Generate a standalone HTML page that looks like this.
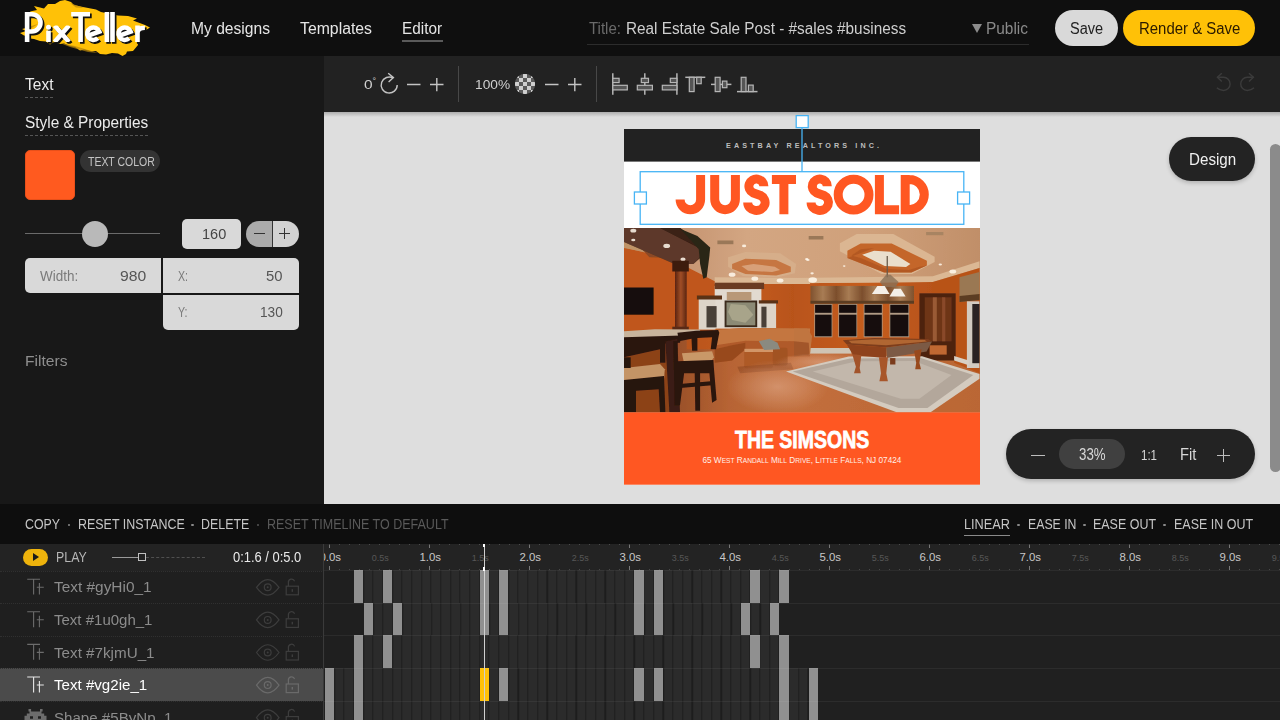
<!DOCTYPE html>
<html>
<head>
<meta charset="utf-8">
<title>PixTeller Editor</title>
<style>
*{box-sizing:border-box;margin:0;padding:0}
html,body{width:1280px;height:720px;overflow:hidden;background:#181818;font-family:"Liberation Sans",sans-serif;}
.a{position:absolute}
.t{position:absolute;white-space:nowrap;line-height:1;transform-origin:0 0}
#hdr{left:0;top:0;width:1280px;height:56px;background:#0f0f0f}
#lp{left:0;top:56px;width:324px;height:448px;background:#181818}
#tb{left:324px;top:56px;width:956px;height:56px;background:#222222}
#cv{left:324px;top:112px;width:956px;height:392px;background:#dedede;overflow:hidden}
#ab{left:0;top:504px;width:1280px;height:40px;background:#0e0e0e}
#tl{left:0;top:544px;width:1280px;height:176px;background:#222;overflow:hidden}
</style>
</head>
<body>
<!-- HEADER -->
<div id="hdr" class="a">
  <svg class="a" style="left:0;top:0" width="170" height="56" viewBox="0 0 170 56">
    <defs><clipPath id="xc"><rect x="50" y="25.6" width="24" height="16.4"/></clipPath></defs>
    <polygon fill="#ffc107" points="20,33 26,31 22,29 28,27.5 26,24 31,21 27,17 33,15 30,11.5 37,10 34,6 44,8.5 48,4 55,4 60,1 65,0 71,2 74,5 83,7 96,9.5 101,12 118,15.5 128,16 137,18.5 133,20.5 145,25 150,27.5 146,30 138,31 141,36 137,40 138,45 133,51 127,51.5 126,54 122.5,56 118,53.5 112,53 106,54.5 100,54 96,51 92,51.5 84,49.5 80,50.5 75,47 70,46 64,43.5 60,44 54,42 50,44.5 46,41.5 40,41 34,39 30,38.5 28,36 24,35.5"/>
    <path d="M60,43 L75,46 L98,53 L88,52 L70,47Z M70,3 L84,8 L76,7.5Z M28,27 L38,24 L30,29Z" fill="#b8860b" opacity="0.7"/>
    <g transform="translate(1.7,1.7)" fill="none" stroke="#111" stroke-width="4.6"><path d="M27.1 12 V42 M27.1 14.2 H31.85 A8.65 8.65 0 0 1 31.85 31.5 H27.1"/>
<path d="M48.5 30.6 V42"/><circle cx="48.5" cy="27.2" r="2.5" stroke="none" fill="#111"/>
<path d="M54.6 25.6 L69 42 M69 25.6 L54.6 42" clip-path="url(#xc)"/>
<path d="M71.2 14.2 H90 M80.6 12 V42"/>
<path d="M87.5 35.9 L99.3 31.6 A6.25 6.25 0 1 0 97.8 38.2"/>
<path d="M106.9 12 V42 M112.5 12 V42"/>
<path d="M118.8 35.9 L130.6 31.6 A6.25 6.25 0 1 0 129.1 38.2"/>
<path d="M137.5 25.6 V42 M137.5 33 Q137.5 27.8 144.9 27.8"/></g>
    <g fill="none" stroke="#fff" stroke-width="4.6"><path d="M27.1 12 V42 M27.1 14.2 H31.85 A8.65 8.65 0 0 1 31.85 31.5 H27.1"/>
<path d="M48.5 30.6 V42"/><circle cx="48.5" cy="27.2" r="2.5" stroke="none" fill="#fff"/>
<path d="M54.6 25.6 L69 42 M69 25.6 L54.6 42" clip-path="url(#xc)"/>
<path d="M71.2 14.2 H90 M80.6 12 V42"/>
<path d="M87.5 35.9 L99.3 31.6 A6.25 6.25 0 1 0 97.8 38.2"/>
<path d="M106.9 12 V42 M112.5 12 V42"/>
<path d="M118.8 35.9 L130.6 31.6 A6.25 6.25 0 1 0 129.1 38.2"/>
<path d="M137.5 25.6 V42 M137.5 33 Q137.5 27.8 144.9 27.8"/></g>
  </svg>
  <div class="t" id="n1" style="left:191px;top:20.8px;font-size:15.6px;color:#e6e6e6;transform:scaleX(1.002)">My designs</div>
  <div class="t" id="n2" style="left:300px;top:20.8px;font-size:15.6px;color:#e6e6e6;transform:scaleX(1.013)">Templates</div>
  <div class="t" id="n3" style="left:402px;top:20.8px;font-size:15.6px;color:#e6e6e6;transform:scaleX(0.982)">Editor</div>
  <div class="a" style="left:402px;top:40.3px;width:40.5px;height:1.7px;background:#5a5a5a"></div>
  <div class="t" id="ti1" style="left:589px;top:20.8px;font-size:15.6px;color:#6a6a6a;transform:scaleX(0.963)">Title:</div>
  <div class="t" id="ti2" style="left:626px;top:20.8px;font-size:15.6px;color:#cfcfcf;transform:scaleX(0.982)">Real Estate Sale Post - #sales #business</div>
  <div class="a" style="left:587px;top:44px;width:442px;height:1px;background:#2c2c2c"></div>
  <div class="a" style="left:972px;top:24px;width:0;height:0;border-left:5px solid transparent;border-right:5px solid transparent;border-top:9px solid #8c8c8c"></div>
  <div class="t" id="pub" style="left:986px;top:20.8px;font-size:15.6px;color:#8a8a8a;transform:scaleX(0.989)">Public</div>
  <div class="a" style="left:1055px;top:10px;width:63px;height:36px;border-radius:18px;background:#d9d9d9"></div>
  <div class="t" id="sv" style="left:1070px;top:20.8px;font-size:15.6px;color:#222;transform:scaleX(0.934)">Save</div>
  <div class="a" style="left:1123px;top:10px;width:132px;height:36px;border-radius:18px;background:#ffc107"></div>
  <div class="t" id="rs" style="left:1139px;top:20.8px;font-size:15.6px;color:#2a1a00;transform:scaleX(0.958)">Render &amp; Save</div>
</div>

<!-- LEFT PANEL -->
<div id="lp" class="a">
  <div class="t" id="l1" style="left:25px;top:20.9px;font-size:15.6px;color:#ececec;transform:scaleX(0.996)">Text</div>
  <div class="a" style="left:25px;top:41px;width:28px;height:0;border-top:1px dashed #555"></div>
  <div class="t" id="l2" style="left:25px;top:58.8px;font-size:15.6px;color:#ececec;transform:scaleX(0.987)">Style &amp; Properties</div>
  <div class="a" style="left:25px;top:79px;width:123px;height:0;border-top:1px dashed #555"></div>
  <div class="a" style="left:25px;top:94px;width:50px;height:50px;border-radius:5px;background:#ff5a1f;border:1px solid #e8501a"></div>
  <div class="a" style="left:80px;top:94px;width:80px;height:22px;border-radius:11px;background:#333"></div>
  <div class="t" id="l3" style="left:87.5px;top:99.7px;font-size:12px;color:#c4c4c4;transform:scaleX(0.873)">TEXT COLOR</div>
  <!-- slider -->
  <div class="a" style="left:25px;top:177px;width:135px;height:1px;background:#6a6a6a"></div>
  <div class="a" style="left:82px;top:165px;width:26px;height:26px;border-radius:13px;background:#b9b9b9"></div>
  <div class="a" style="left:182px;top:163px;width:59px;height:30px;border-radius:5px;background:#d9d9d9"></div>
  <div class="t" id="l4" style="left:202px;top:170px;font-size:15px;color:#444;transform:scaleX(0.969)">160</div>
  <div class="a" style="left:246px;top:165px;width:27px;height:26px;border-radius:13px 0 0 13px;background:#ababab"></div>
  <div class="a" style="left:273px;top:165px;width:26px;height:26px;border-radius:0 13px 13px 0;background:#d2d2d2"></div>
  <div class="a" style="left:272px;top:165px;width:1px;height:26px;background:#333"></div>
  <div class="a" style="left:254px;top:177px;width:11px;height:1px;background:#333"></div>
  <div class="a" style="left:279px;top:177px;width:11px;height:1px;background:#333"></div>
  <div class="a" style="left:284px;top:172px;width:1px;height:11px;background:#333"></div>
  <!-- fields -->
  <div class="a" style="left:25px;top:202px;width:136px;height:35px;border-radius:5px 0 0 5px;background:#d9d9d9"></div>
  <div class="a" style="left:163px;top:202px;width:136px;height:35px;border-radius:0 5px 0 0;background:#d9d9d9"></div>
  <div class="a" style="left:163px;top:239px;width:136px;height:35px;border-radius:0 0 5px 5px;background:#d9d9d9"></div>
  <div class="t" id="l5" style="left:40px;top:213px;font-size:14px;color:#7a7a7a;transform:scaleX(0.964)">Width:</div>
  <div class="t" id="l6" style="left:120px;top:212px;font-size:15px;color:#555;transform:scaleX(1.049)">980</div>
  <div class="t" id="l7" style="left:178px;top:213px;font-size:14px;color:#7a7a7a;transform:scaleX(0.756)">X:</div>
  <div class="t" id="l8" style="left:266px;top:212px;font-size:15px;color:#555;transform:scaleX(0.989)">50</div>
  <div class="t" id="l9" style="left:178px;top:249px;font-size:14px;color:#7a7a7a;transform:scaleX(0.762)">Y:</div>
  <div class="t" id="l10" style="left:260px;top:248px;font-size:15px;color:#555;transform:scaleX(0.909)">130</div>
  <div class="t" id="l11" style="left:25px;top:297px;font-size:15px;color:#8e8e8e;transform:scaleX(1.041)">Filters</div>
</div>

<!-- TOOLBAR -->
<div id="tb" class="a">
  <div class="t" id="t1" style="left:39.5px;top:21.5px;font-size:13.5px;color:#d0d0d0;transform:scaleX(1.144)">0</div>
  <div class="t" id="t1b" style="left:48.5px;top:20.5px;font-size:9px;color:#d0d0d0">°</div>
  <div class="t" id="t2" style="left:150.5px;top:21.5px;font-size:13.5px;color:#d0d0d0;transform:scaleX(1.016)">100%</div>
  <svg class="a" style="left:0;top:0" width="956" height="56" viewBox="324 56 956 56" fill="none" stroke="#c4c4c4" stroke-width="1.4">
    <defs><clipPath id="ck"><circle cx="525" cy="84" r="10.2"/></clipPath></defs>
    <!-- rotate -->
    <path d="M393.2 78.1 A8 8 0 1 0 397.2 85"/>
    <path d="M388.2 73.2 L393.4 77.6 L388.6 81.9"/>
    <path d="M407 84.5 H420.5 M430 84.5 H443.5 M436.8 78 V91.2"/>
    <path d="M458.5 66 V102 M596.5 66 V102" stroke="#484848" stroke-width="1"/>
    <g clip-path="url(#ck)" stroke="none"><rect x="515" y="74" width="4.1" height="4.1" fill="#cfcfcf"/><rect x="519" y="74" width="4.1" height="4.1" fill="#5a5a5a"/><rect x="523" y="74" width="4.1" height="4.1" fill="#cfcfcf"/><rect x="527" y="74" width="4.1" height="4.1" fill="#5a5a5a"/><rect x="531" y="74" width="4.1" height="4.1" fill="#cfcfcf"/><rect x="515" y="78" width="4.1" height="4.1" fill="#5a5a5a"/><rect x="519" y="78" width="4.1" height="4.1" fill="#cfcfcf"/><rect x="523" y="78" width="4.1" height="4.1" fill="#5a5a5a"/><rect x="527" y="78" width="4.1" height="4.1" fill="#cfcfcf"/><rect x="531" y="78" width="4.1" height="4.1" fill="#5a5a5a"/><rect x="515" y="82" width="4.1" height="4.1" fill="#cfcfcf"/><rect x="519" y="82" width="4.1" height="4.1" fill="#5a5a5a"/><rect x="523" y="82" width="4.1" height="4.1" fill="#cfcfcf"/><rect x="527" y="82" width="4.1" height="4.1" fill="#5a5a5a"/><rect x="531" y="82" width="4.1" height="4.1" fill="#cfcfcf"/><rect x="515" y="86" width="4.1" height="4.1" fill="#5a5a5a"/><rect x="519" y="86" width="4.1" height="4.1" fill="#cfcfcf"/><rect x="523" y="86" width="4.1" height="4.1" fill="#5a5a5a"/><rect x="527" y="86" width="4.1" height="4.1" fill="#cfcfcf"/><rect x="531" y="86" width="4.1" height="4.1" fill="#5a5a5a"/><rect x="515" y="90" width="4.1" height="4.1" fill="#cfcfcf"/><rect x="519" y="90" width="4.1" height="4.1" fill="#5a5a5a"/><rect x="523" y="90" width="4.1" height="4.1" fill="#cfcfcf"/><rect x="527" y="90" width="4.1" height="4.1" fill="#5a5a5a"/><rect x="531" y="90" width="4.1" height="4.1" fill="#cfcfcf"/></g>
    <path d="M545 84.5 H558.5 M568 84.5 H581.5 M574.8 78 V91.2"/>
    <!-- align left -->
    <g stroke-width="1.2" fill="#555" stroke="#b6b6b6">
    <path d="M612.8 73.3 V94.7" stroke-width="1.5"/>
    <rect x="612.8" y="78.3" width="6.3" height="4.3"/>
    <rect x="612.8" y="85.3" width="14.5" height="4.6"/>
    <!-- center h -->
    <path d="M644.8 73.3 V94.7" stroke-width="1.5"/>
    <rect x="641.3" y="78.3" width="7.2" height="4.3"/>
    <rect x="637.3" y="85.3" width="15.1" height="4.6"/>
    <!-- right -->
    <path d="M676.9 73.3 V94.7" stroke-width="1.5"/>
    <rect x="670.3" y="78.3" width="6.6" height="4.3"/>
    <rect x="662.3" y="85.3" width="14.6" height="4.6"/>
    <!-- top -->
    <path d="M685.3 77.3 H705.3" stroke-width="1.5"/>
    <rect x="689.3" y="77.3" width="4.8" height="14.3"/>
    <rect x="696.7" y="77.3" width="4.5" height="6.4"/>
    <!-- middle -->
    <path d="M711 84.4 H731.4" stroke-width="1.5"/>
    <rect x="715.2" y="77.3" width="4.9" height="14.3"/>
    <rect x="722.4" y="81.1" width="4.5" height="6.6"/>
    <!-- bottom -->
    <path d="M737 91.6 H757.5" stroke-width="1.5"/>
    <rect x="741.2" y="77.3" width="4.8" height="14.3"/>
    <rect x="748.4" y="85.1" width="4.8" height="6.5"/>
    </g>
    <!-- undo redo -->
    <g stroke="#3b3b3b" stroke-width="1.4">
    <path d="M1217.2 77.3 H1223.5 A6.6 6.6 0 0 1 1223.5 90.5 Q1219.5 90.5 1216.8 87.8"/>
    <path d="M1221.8 73.3 L1217.4 77.3 L1221.8 81.6"/>
    <path d="M1253.6 77.3 H1247.3 A6.6 6.6 0 0 0 1247.3 90.5 Q1251.3 90.5 1254 87.8"/>
    <path d="M1249 73.3 L1253.4 77.3 L1249 81.6"/>
    </g>
  </svg>
</div>

<!-- CANVAS -->
<div id="cv" class="a">
  <div class="a" style="left:0;top:0;width:956px;height:5px;background:linear-gradient(#00000038,#0000)"></div>
  <svg class="a" style="left:0;top:0" width="956" height="392" viewBox="324 112 956 392">
    <rect x="624" y="129" width="356" height="355.7" fill="#fff"/>
    <rect x="624" y="129" width="356" height="32.6" fill="#222"/>
    <text x="726" y="147.8" font-family="Liberation Sans" font-weight="bold" font-size="7.2" fill="#bdbdbd" textLength="153" lengthAdjust="spacing">EASTBAY REALTORS INC.</text>
    <rect x="624" y="228" width="356" height="184.5" fill="#b8662e"/><!--PHOTO_START--><defs>
<clipPath id="pc"><rect x="624" y="228" width="356" height="184.5"/></clipPath>
<filter id="pb" x="-5%" y="-5%" width="110%" height="110%"><feGaussianBlur stdDeviation="0.55"/></filter>
<linearGradient id="gceil" x1="0" y1="0" x2="1" y2="0"><stop offset="0" stop-color="#b98462"/><stop offset="0.35" stop-color="#d3a682"/><stop offset="0.7" stop-color="#cfa07a"/><stop offset="1" stop-color="#c08e68"/></linearGradient>
<linearGradient id="gfloor" x1="0" y1="0" x2="1" y2="0"><stop offset="0" stop-color="#7a3a1c"/><stop offset="0.3" stop-color="#b76434"/><stop offset="0.5" stop-color="#c26e3c"/><stop offset="1" stop-color="#ba6634"/></linearGradient>
<linearGradient id="gwall" x1="0" y1="0" x2="1" y2="0"><stop offset="0" stop-color="#b9541a"/><stop offset="0.45" stop-color="#c55d1e"/><stop offset="1" stop-color="#b45018"/></linearGradient>
<linearGradient id="gcol" x1="0" y1="0" x2="1" y2="0"><stop offset="0" stop-color="#5a2410"/><stop offset="0.5" stop-color="#a04e26"/><stop offset="1" stop-color="#5a2410"/></linearGradient>
<linearGradient id="gshade" x1="0" y1="0" x2="1" y2="0"><stop offset="0" stop-color="#80522e"/><stop offset="0.12" stop-color="#a87c54"/><stop offset="0.25" stop-color="#7c4e2c"/><stop offset="0.37" stop-color="#a87c54"/><stop offset="0.5" stop-color="#7c4e2c"/><stop offset="0.62" stop-color="#a87c54"/><stop offset="0.75" stop-color="#7c4e2c"/><stop offset="0.87" stop-color="#a87c54"/><stop offset="1" stop-color="#80522e"/></linearGradient>
<radialGradient id="ghl"><stop offset="0" stop-color="#e0aa8a" stop-opacity="0.6"/><stop offset="1" stop-color="#e2b094" stop-opacity="0"/></radialGradient>
</defs>
<g clip-path="url(#pc)"><g filter="url(#pb)">
<rect x="620" y="224" width="364" height="70" fill="url(#gceil)"/>
<rect x="620" y="330" width="364" height="86" fill="url(#gfloor)"/>
<polygon points="686.7,284.0 810.0,284.0 810.0,349.3 686.7,349.3" fill="url(#gwall)" />
<polygon points="794.0,283.2 932.8,282.1 954.1,278.7 954.1,349.3 794.0,349.3" fill="url(#gwall)" />
<polygon points="714.7,277.3 810.0,278.1 810.0,284.0 714.7,284.0" fill="#dbb894" />
<polygon points="794.0,278.1 932.8,276.3 979.5,261.3 979.5,268.0 932.8,282.1 794.0,283.2" fill="#dbb894" />
<polygon points="932.8,282.1 979.5,268.0 979.5,373.3 954.1,362.7 954.1,349.3 932.8,349.3" fill="#b85319" />
<polygon points="624.0,247.5 670.7,258.7 714.7,281.3 714.7,330.7 624.0,333.3" fill="#c0561a" />
<polygon points="624.0,240.0 670.7,257.3 624.0,248.0" fill="#c09468" />
<polygon points="642.7,249.9 670.7,250.7 672.0,258.1 649.4,257.3" fill="#8c4a26" />
<polygon points="624.0,228.0 680.0,228.0 710.2,249.3 693.4,264.0 674.7,264.0 624.0,242.1" fill="#4a2c1e" />
<polygon points="624.0,228.0 660.0,228.0 705.4,250.7 693.4,264.0 674.7,264.0 624.0,242.1" fill="#6e4634" opacity="0.55"/>
<polygon points="660.0,228.0 680.0,228.0 710.2,249.3 706.7,252.0" fill="#3a2014" />
<polygon points="680.0,228.8 697.4,236.0 710.2,247.5 709.4,256.0 706.7,277.3 703.3,278.7 700.1,264.0 698.7,249.3 688.1,237.3" fill="#2c2618" />
<rect x="717.4" y="240.5" width="16.0" height="3.7" fill="#9a7858" />
<rect x="808.7" y="236.0" width="14.7" height="3.5" fill="#9a7858" />
<rect x="926.1" y="232.0" width="17.3" height="3.2" fill="#a88462" />
<rect x="675.0" y="264.0" width="11.7" height="65.3" fill="url(#gcol)" />
<rect x="672.3" y="260.8" width="16.5" height="10.7" fill="#3c1c10" />
<rect x="672.3" y="326.7" width="16.5" height="4.0" fill="#5a2c18" />
<rect x="624.0" y="287.5" width="29.6" height="27.2" fill="#170d0a" />
<polygon points="728.1,257.3 745.4,252.0 780.1,253.3 796.1,264.0 794.8,273.3 777.5,277.3 742.8,276.0 728.1,266.7" fill="#d6ae8a" />
<polygon points="732.1,264.0 745.4,258.7 776.1,260.0 790.8,266.7 790.8,272.0 776.1,275.5 745.4,274.1 732.1,268.8" fill="#c4703a" opacity="0.9"/>
<polygon points="741.4,266.1 753.4,264.0 774.8,266.7 780.1,269.9 772.1,272.0 748.1,270.7" fill="#d8a078" />
<polygon points="839.9,243.2 856.7,234.1 893.3,234.1 934.6,256.8 934.6,261.9 912.0,274.1 881.5,274.1 839.9,251.2" fill="#dbb692" />
<polygon points="847.4,250.7 860.7,243.5 891.7,243.5 926.9,260.8 926.9,265.6 911.4,272.5 884.2,272.5 847.4,258.1" fill="#c4662a" />
<polygon points="851.4,255.5 860.7,249.3 874.1,248.0 847.4,258.1 884.2,272.5 911.4,272.5 926.9,265.6 919.4,266.7 908.8,269.9 886.1,268.8 860.7,258.1" fill="#a85020" opacity="0.6"/>
<polygon points="862.1,254.7 874.1,250.7 890.6,251.7 910.4,264.0 906.1,266.9 884.7,266.1" fill="#eadfcc" />
<rect x="714.7" y="285.9" width="46.7" height="42.7" fill="#e2dad0" />
<rect x="698.7" y="298.7" width="16.8" height="30.9" fill="#ddd4c8" />
<rect x="760.9" y="302.9" width="15.2" height="25.6" fill="#ddd4c8" />
<rect x="714.7" y="282.7" width="49.4" height="6.4" fill="#6a3a20" />
<rect x="696.9" y="295.5" width="25.1" height="4.0" fill="#5a3018" />
<rect x="758.8" y="300.3" width="19.2" height="3.2" fill="#5a3018" />
<rect x="726.8" y="292.0" width="24.6" height="8.0" fill="#b89878" />
<rect x="724.6" y="300.5" width="32.6" height="26.7" fill="#3a2a1c" />
<rect x="726.5" y="302.4" width="28.8" height="22.9" fill="#8c8a74" />
<polygon points="730.8,304.0 745.4,305.3 753.4,314.7 745.4,322.7 732.1,320.0 728.1,312.0" fill="#a8a48a" />
<rect x="706.5" y="306.1" width="10.1" height="21.3" fill="#4a4038" />
<rect x="761.4" y="306.7" width="5.1" height="20.8" fill="#4a4038" />
<rect x="810.5" y="285.9" width="103.5" height="17.3" fill="url(#gshade)" />
<rect x="810.5" y="300.8" width="103.5" height="2.9" fill="#5c3c22" />
<rect x="814.3" y="304.0" width="18.1" height="33.3" fill="#b09a84" />
<rect x="815.1" y="304.8" width="16.5" height="8.0" fill="#120c0a" />
<rect x="815.1" y="314.7" width="16.5" height="21.6" fill="#120c0a" />
<rect x="838.3" y="304.0" width="18.9" height="33.3" fill="#b09a84" />
<rect x="839.1" y="304.8" width="17.3" height="8.0" fill="#120c0a" />
<rect x="839.1" y="314.7" width="17.3" height="21.6" fill="#120c0a" />
<rect x="863.7" y="304.0" width="18.9" height="33.3" fill="#b09a84" />
<rect x="864.5" y="304.8" width="17.3" height="8.0" fill="#120c0a" />
<rect x="864.5" y="314.7" width="17.3" height="21.6" fill="#120c0a" />
<rect x="889.5" y="304.0" width="19.7" height="33.3" fill="#b09a84" />
<rect x="890.3" y="304.8" width="18.1" height="8.0" fill="#120c0a" />
<rect x="890.3" y="314.7" width="18.1" height="21.6" fill="#120c0a" />
<rect x="919.4" y="293.3" width="36.3" height="67.2" fill="#4e2410" />
<rect x="924.8" y="297.3" width="26.7" height="44.0" fill="#6e3418" />
<rect x="932.8" y="297.3" width="4.0" height="44.0" fill="#9a5a34" />
<rect x="942.1" y="297.3" width="3.2" height="44.0" fill="#8a4a2a" />
<rect x="929.6" y="345.3" width="17.1" height="9.3" fill="#c06830" />
<polygon points="959.5,277.3 979.5,272.0 979.5,300.0 959.5,301.9" fill="#9a7852" />
<polygon points="959.5,296.0 979.5,293.9 979.5,300.0 959.5,301.9" fill="#5c3c22" />
<rect x="966.9" y="301.3" width="12.5" height="66.7" fill="#d2cac0" />
<rect x="972.3" y="304.0" width="7.2" height="59.2" fill="#2a2420" />
<polygon points="954.1,356.0 968.8,360.5 968.8,365.3 954.1,360.5" fill="#d8cfc4" />
<rect x="810.0" y="348.0" width="41.4" height="5.6" fill="#cfc4b4" />
<polygon points="713.4,330.1 745.4,328.0 810.0,328.5 810.0,356.5 785.5,356.5 787.6,348.8 745.4,349.3 732.1,360.5 714.7,362.7 714.7,349.3" fill="#b05a2a" />
<polygon points="713.4,330.1 745.4,328.0 810.0,328.5 810.0,341.3 745.4,340.8 715.5,345.3" fill="#c4763f" />
<polygon points="714.7,349.3 732.1,345.3 745.4,342.7 745.4,349.3 732.1,360.5 714.7,362.7" fill="#984a1e" />
<polygon points="794.0,328.5 807.3,328.5 812.1,336.0 810.0,354.7 794.0,356.5" fill="#c07440" />
<polygon points="794.0,341.3 808.7,342.7 809.5,354.7 794.0,356.5" fill="#a2562a" />
<rect x="744.1" y="349.3" width="28.8" height="18.9" fill="#ae5a28" rx="2"/>
<rect x="772.7" y="347.7" width="14.9" height="17.9" fill="#a25222" rx="2"/>
<rect x="744.4" y="348.8" width="28.6" height="3.2" fill="#d29668" />
<polygon points="737.4,366.7 790.8,362.7 793.5,369.3 740.1,373.3" fill="#8a4420" opacity="0.5"/>
<polygon points="758.8,341.3 769.5,338.7 777.5,342.7 780.1,349.3 764.1,349.9" fill="#8a8a80" />
<ellipse cx="777.5" cy="386.7" rx="50.7" ry="26.7" fill="url(#ghl)" />
<ellipse cx="820.7" cy="362.1" rx="45.4" ry="9.3" fill="url(#ghl)" />
<polygon points="786.0,371.5 848.7,356.5 922.1,356.3 979.5,373.9 979.5,378.7 930.6,412.3 896.7,412.3" fill="#d4cbbf" />
<polygon points="792.7,371.5 850.0,358.4 920.8,358.1 973.3,374.9 927.4,408.0 898.6,408.0" fill="#b3a79b" />
<polygon points="812.7,371.5 856.7,361.3 914.1,361.1 951.5,374.9 919.4,398.7 900.8,398.7" fill="#c2b7ab" />
<polygon points="842.8,340.3 874.1,337.9 928.0,338.9 932.0,341.6 886.1,347.5 846.8,344.5" fill="#7e3e1c" />
<polygon points="848.7,340.8 874.6,339.2 924.8,340.0 926.9,341.6 886.1,345.3 851.4,343.2" fill="#b06632" />
<polygon points="846.8,344.5 886.1,347.5 886.1,358.1 853.2,355.2" fill="#8e421c" />
<polygon points="886.1,347.5 932.0,341.6 926.6,351.5 886.9,358.1" fill="#7c5a44" />
<polygon points="852.2,354.1 861.3,355.2 859.7,368.0 860.7,373.3 854.0,373.3 855.9,366.7" fill="#a2522a" />
<polygon points="878.9,357.3 887.9,357.3 886.3,373.3 887.9,381.3 879.4,381.3 881.0,373.3" fill="#a8562c" />
<polygon points="914.1,350.7 921.6,349.3 919.4,362.7 921.0,369.3 915.2,369.3 916.2,362.7" fill="#98491f" />
<rect x="890.1" y="358.1" width="5.3" height="6.4" fill="#7a3a1a" />
<rect x="886.6" y="256.0" width="1.3" height="21.3" fill="#6a5a4a" />
<polygon points="879.9,282.1 886.1,274.7 890.6,274.7 898.6,282.1 895.4,286.9 883.4,286.9" fill="#8a7058" opacity="0.8"/>
<polygon points="871.9,293.9 877.3,285.9 884.7,285.9 889.5,293.9" fill="#f4eee6" />
<polygon points="889.5,296.5 894.1,288.8 900.8,288.8 905.6,296.5" fill="#f4eee6" />
<polygon points="624.0,341.3 677.4,337.3 677.4,412.3 624.0,412.3" fill="#8c4219" />
<polygon points="624.0,331.2 654.7,329.3 700.1,329.6 700.1,333.3 681.4,337.3 624.0,340.8" fill="#c8b49c" />
<polygon points="624.0,337.3 681.4,335.5 680.0,342.7 624.0,345.3" fill="#2a140e" />
<polygon points="624.0,341.3 660.0,339.2 665.4,342.7 665.4,362.7 660.0,362.7 660.0,349.3 624.0,357.3" fill="#2c1610" />
<polygon points="624.0,368.0 660.0,364.0 664.8,369.3 664.0,380.0 624.0,384.0" fill="#c49466" />
<polygon points="624.0,380.0 664.0,376.0 665.4,412.3 660.0,412.3 658.7,389.3 636.0,390.7 636.0,412.3 624.0,412.3" fill="#28130d" />
<rect x="624.0" y="357.3" width="6.7" height="10.7" fill="#28130d" />
<polygon points="665.4,341.3 677.4,338.7 680.0,412.3 669.4,412.3" fill="#3a1c12" />
<polygon points="677.4,332.8 696.1,330.7 718.2,330.1 719.3,332.8 716.1,349.3 710.7,349.3 712.1,337.3 697.4,338.1 697.4,350.7 692.1,350.7 691.5,338.7 679.2,341.3" fill="#2c1610" />
<polygon points="681.9,353.3 712.1,351.2 713.9,357.3 710.7,362.1 684.1,363.2" fill="#c99868" />
<polygon points="677.4,361.3 713.4,360.0 713.9,368.0 716.6,400.0 712.1,402.7 709.4,373.3 700.1,373.3 700.1,410.7 695.3,410.7 694.7,373.3 684.1,373.3 680.0,405.3 674.7,405.3 673.4,341.3 677.4,341.3" fill="#2a140e" />
<polygon points="680.0,384.0 710.7,381.3 712.1,385.3 680.0,388.0" fill="#2a140e" />
<ellipse cx="633.3" cy="230.7" rx="3.0" ry="1.9" fill="#fff8ec" opacity="0.85"/>
<ellipse cx="666.7" cy="245.9" rx="3.4" ry="2.1" fill="#fff8ec" opacity="0.85"/>
<ellipse cx="683.0" cy="259.2" rx="2.6" ry="1.6" fill="#fff8ec" opacity="0.85"/>
<ellipse cx="744.1" cy="245.9" rx="2.1" ry="1.3" fill="#fff8ec" opacity="0.85"/>
<ellipse cx="633.3" cy="240.0" rx="2.1" ry="1.3" fill="#fff8ec" opacity="0.85"/>
<ellipse cx="806.8" cy="259.2" rx="1.7" ry="1.1" fill="#fff8ec" opacity="0.85"/>
<ellipse cx="807.9" cy="260.0" rx="1.7" ry="1.1" fill="#fff8ec" opacity="0.85"/>
<ellipse cx="940.3" cy="264.5" rx="1.7" ry="1.1" fill="#fff8ec" opacity="0.85"/>
<ellipse cx="812.1" cy="273.3" rx="1.7" ry="1.1" fill="#fff8ec" opacity="0.85"/>
<ellipse cx="844.2" cy="266.1" rx="1.3" ry="0.8" fill="#fff8ec" opacity="0.85"/>
<ellipse cx="732.1" cy="274.7" rx="3.4" ry="2.1" fill="#fff8ec" opacity="0.85"/>
<ellipse cx="754.8" cy="278.7" rx="3.4" ry="2.1" fill="#fff8ec" opacity="0.85"/>
<ellipse cx="780.1" cy="280.5" rx="3.4" ry="2.1" fill="#fff8ec" opacity="0.85"/>
<ellipse cx="812.7" cy="280.0" rx="4.3" ry="2.7" fill="#fff8ec" opacity="0.85"/>
<ellipse cx="952.8" cy="271.5" rx="3.4" ry="2.1" fill="#fff8ec" opacity="0.85"/>
</g></g><!--PHOTO_END-->
    
    <rect x="624" y="412.4" width="356" height="72.3" fill="#ff5722"/>
    <g fill="none" stroke="#ff5722" stroke-width="9">
      <path d="M700.6 175 V199.45 A10.25 10.25 0 0 1 680.1 199.45"/>
      <path d="M714.7 175 V199.35 A10.35 10.35 0 0 0 735.4 199.35 V175"/>
      <path d="M763.90 186.3 A7.5 7.3 0 1 0 752.94 192.77 L760.42 195.4 A8.7 8 0 1 1 747.70 202.5"/>
      <path d="M771.9 179.6 H796 M783.9 175 V214.2"/>
      <path d="M827.30 186.3 A7.5 7.3 0 1 0 816.34 192.77 L823.82 195.4 A8.7 8 0 1 1 811.10 202.5"/>
      <circle cx="853.6" cy="194.65" r="15.4"/>
      <path d="M879.4 175 V209.7 M874.9 209.7 H899.1"/>
      <path d="M905.2 175 V214.2 M905.2 179.5 H909.2 A15.1 15.1 0 0 1 909.2 209.7 H905.2"/>
    </g>
    <text x="735" y="447.7" font-family="Liberation Sans" font-weight="bold" font-size="23.8" fill="#fff" stroke="#fff" stroke-width="0.8" textLength="134.2" lengthAdjust="spacingAndGlyphs">THE SIMSONS</text>
    <text x="702.4" y="463" font-family="Liberation Sans" font-size="8.8" fill="#fff0e8" textLength="199" lengthAdjust="spacingAndGlyphs">65 W<tspan font-size="7.1">EST</tspan> R<tspan font-size="7.1">ANDALL</tspan> M<tspan font-size="7.1">ILL</tspan> D<tspan font-size="7.1">RIVE</tspan>, L<tspan font-size="7.1">ITTLE</tspan> F<tspan font-size="7.1">ALLS</tspan>, NJ 07424</text>
    <!-- selection -->
    <g fill="none" stroke="#47b4f5" stroke-width="1.3">
      <rect x="640.2" y="171.7" width="323.6" height="52.6"/>
      <path d="M802 127.5 V171.5"/>
      <g fill="#fff">
      <rect x="634.4" y="192" width="12" height="12"/>
      <rect x="957.6" y="192" width="12" height="12"/>
      <rect x="796.2" y="115.6" width="12" height="12"/>
      </g>
    </g>
  </svg>
  <!-- design button -->
  <div class="a" style="left:844.5px;top:25px;width:86.5px;height:43.5px;border-radius:22px;background:#232323;box-shadow:0 2px 4px #0003"></div>
  <div class="t" id="c1" style="left:864.5px;top:40px;font-size:15.6px;color:#f0f0f0;transform:scaleX(0.972)">Design</div>
  <!-- zoom -->
  <div class="a" style="left:682px;top:317px;width:249px;height:49.5px;border-radius:25px;background:#232323;box-shadow:0 2px 4px #0003"></div>
  <div class="a" style="left:735px;top:327px;width:66px;height:29.5px;border-radius:15px;background:#404040"></div>
  <div class="a" style="left:707px;top:342.5px;width:14px;height:1.4px;background:#bdbdbd"></div>
  <div class="a" style="left:892.5px;top:342.5px;width:13.5px;height:1.4px;background:#bdbdbd"></div>
  <div class="a" style="left:898.5px;top:336.5px;width:1.4px;height:13.5px;background:#bdbdbd"></div>
  <div class="t" id="c2" style="left:755px;top:335px;font-size:16px;color:#d8d8d8;transform:scaleX(0.830)">33%</div>
  <div class="t" id="c3" style="left:817px;top:336px;font-size:14px;color:#d8d8d8;transform:scaleX(0.822)">1:1</div>
  <div class="t" id="c4" style="left:855.5px;top:335px;font-size:16px;color:#d8d8d8;transform:scaleX(0.922)">Fit</div>
  <!-- scrollbar -->
  <div class="a" style="left:946.2px;top:31.5px;width:11px;height:328px;border-radius:5.5px;background:#8b8b8b"></div>
</div>

<!-- ACTION BAR -->
<div id="ab" class="a">
  <div class="t" id="a1" style="left:25px;top:13px;font-size:14px;color:#c6c6c6;transform:scaleX(0.882)">COPY</div>
  <div class="t" id="a2" style="left:77.5px;top:13px;font-size:14px;color:#c6c6c6;transform:scaleX(0.889)">RESET INSTANCE</div>
  <div class="t" id="a3" style="left:201px;top:13px;font-size:14px;color:#c6c6c6;transform:scaleX(0.886)">DELETE</div>
  <div class="t" id="a4" style="left:267px;top:13px;font-size:14px;color:#5a5a5a;transform:scaleX(0.893)">RESET TIMELINE TO DEFAULT</div>
  <div class="t" id="a5" style="left:964px;top:13px;font-size:14px;color:#c6c6c6;transform:scaleX(0.909)">LINEAR</div>
  <div class="a" style="left:964px;top:30.5px;width:46px;height:1px;background:#8a8a8a"></div>
  <div class="t" id="a6" style="left:1027.5px;top:13px;font-size:14px;color:#c6c6c6;transform:scaleX(0.878)">EASE IN</div>
  <div class="t" id="a7" style="left:1093px;top:13px;font-size:14px;color:#c6c6c6;transform:scaleX(0.890)">EASE OUT</div>
  <div class="t" id="a8" style="left:1173.5px;top:13px;font-size:14px;color:#c6c6c6;transform:scaleX(0.891)">EASE IN OUT</div>
  <div class="a" style="left:67.5px;top:19.5px;width:2.4px;height:2.4px;border-radius:2px;background:#8a8a8a"></div><div class="a" style="left:191.3px;top:19.5px;width:2.4px;height:2.4px;border-radius:2px;background:#8a8a8a"></div><div class="a" style="left:256.8px;top:19.5px;width:2.4px;height:2.4px;border-radius:2px;background:#555"></div><div class="a" style="left:1017.3px;top:19.5px;width:2.4px;height:2.4px;border-radius:2px;background:#8a8a8a"></div><div class="a" style="left:1083.3px;top:19.5px;width:2.4px;height:2.4px;border-radius:2px;background:#8a8a8a"></div><div class="a" style="left:1163.3px;top:19.5px;width:2.4px;height:2.4px;border-radius:2px;background:#8a8a8a"></div>
</div>

<!-- TIMELINE -->
<div id="tl" class="a">
<div class="a" style="left:0;top:0;width:324px;height:27px;background:#232323"></div>
<div class="a" style="left:23px;top:5px;width:24.5px;height:16.5px;border-radius:8.5px;background:#eeb30c"></div>
<div class="a" style="left:32.5px;top:8.6px;width:0;height:0;border-top:4.4px solid transparent;border-bottom:4.4px solid transparent;border-left:6.5px solid #1a1a1a"></div>
<div class="t" id="p1" style="left:55.5px;top:5.6px;font-size:14px;color:#b6b6b6;transform:scaleX(0.884)">PLAY</div>
<div class="a" style="left:112px;top:12.5px;width:26px;height:1px;background:#9a9a9a"></div>
<div class="a" style="left:146px;top:12.5px;width:59px;height:0;border-top:1px dashed #505050"></div>
<div class="a" style="left:138px;top:9px;width:7.5px;height:7.5px;border:1px solid #c0c0c0;background:#222"></div>
<div class="t" id="p2" style="left:232.5px;top:5.6px;font-size:14px;color:#eaeaea;transform:scaleX(0.923)">0:1.6 / 0:5.0</div>
<div class="a" style="left:0;top:26.6px;width:324px;height:32.6px;background:#1f1f1f;border-top:1px dotted #303030"></div>
<div class="t" id="r0" style="left:54.4px;top:35.4px;font-size:15.2px;color:#8c8c8c;transform:scaleX(1.014)">Text #gyHi0_1</div>
<svg class="a" style="left:0;top:0;overflow:visible" width="324" height="176"><path d="M27.2 35.2 H40 M33.6 35.2 V50.6 M39.4 39.1 V50.6 M36.8 43.2 H43.8" stroke="#6c6c6c" stroke-width="1.1" fill="none"/><path d="M256.5 43.3 Q267.7 27.8 279 43.3 Q267.7 58.8 256.5 43.3Z" fill="none" stroke="#3d3d3d" stroke-width="1.2"/><circle cx="267.7" cy="43.3" r="3.4" fill="none" stroke="#3d3d3d" stroke-width="1.2"/><circle cx="267.7" cy="43.3" r="1" fill="#3d3d3d"/><rect x="286.2" y="42.2" width="12.2" height="8.6" fill="none" stroke="#3d3d3d" stroke-width="1.2"/><path d="M288.4 42.2 V38.6 A3.2 3.2 0 0 1 294.6 37.2" fill="none" stroke="#3d3d3d" stroke-width="1.2"/><rect x="291.6" y="45.2" width="1.4" height="2.6" fill="#3d3d3d"/></svg>
<div class="a" style="left:0;top:59.2px;width:324px;height:32.6px;background:#1f1f1f;border-top:1px dotted #303030"></div>
<div class="t" id="r1" style="left:54.4px;top:68.0px;font-size:15.2px;color:#8c8c8c;transform:scaleX(0.988)">Text #1u0gh_1</div>
<svg class="a" style="left:0;top:0;overflow:visible" width="324" height="176"><path d="M27.2 67.8 H40 M33.6 67.8 V83.2 M39.4 71.7 V83.2 M36.8 75.8 H43.8" stroke="#6c6c6c" stroke-width="1.1" fill="none"/><path d="M256.5 75.9 Q267.7 60.4 279 75.9 Q267.7 91.4 256.5 75.9Z" fill="none" stroke="#3d3d3d" stroke-width="1.2"/><circle cx="267.7" cy="75.9" r="3.4" fill="none" stroke="#3d3d3d" stroke-width="1.2"/><circle cx="267.7" cy="75.9" r="1" fill="#3d3d3d"/><rect x="286.2" y="74.8" width="12.2" height="8.6" fill="none" stroke="#3d3d3d" stroke-width="1.2"/><path d="M288.4 74.8 V71.2 A3.2 3.2 0 0 1 294.6 69.8" fill="none" stroke="#3d3d3d" stroke-width="1.2"/><rect x="291.6" y="77.8" width="1.4" height="2.6" fill="#3d3d3d"/></svg>
<div class="a" style="left:0;top:91.8px;width:324px;height:32.6px;background:#1f1f1f;border-top:1px dotted #303030"></div>
<div class="t" id="r2" style="left:54.4px;top:100.6px;font-size:15.2px;color:#8c8c8c;transform:scaleX(1.001)">Text #7kjmU_1</div>
<svg class="a" style="left:0;top:0;overflow:visible" width="324" height="176"><path d="M27.2 100.4 H40 M33.6 100.4 V115.8 M39.4 104.3 V115.8 M36.8 108.4 H43.8" stroke="#6c6c6c" stroke-width="1.1" fill="none"/><path d="M256.5 108.5 Q267.7 93.0 279 108.5 Q267.7 124.0 256.5 108.5Z" fill="none" stroke="#3d3d3d" stroke-width="1.2"/><circle cx="267.7" cy="108.5" r="3.4" fill="none" stroke="#3d3d3d" stroke-width="1.2"/><circle cx="267.7" cy="108.5" r="1" fill="#3d3d3d"/><rect x="286.2" y="107.4" width="12.2" height="8.6" fill="none" stroke="#3d3d3d" stroke-width="1.2"/><path d="M288.4 107.4 V103.8 A3.2 3.2 0 0 1 294.6 102.4" fill="none" stroke="#3d3d3d" stroke-width="1.2"/><rect x="291.6" y="110.4" width="1.4" height="2.6" fill="#3d3d3d"/></svg>
<div class="a" style="left:0;top:124.4px;width:325px;height:32.6px;background:#4b4b4b;border-top:1px dotted #303030"></div>
<div class="t" id="r3" style="left:54.4px;top:133.2px;font-size:15.2px;color:#ffffff;transform:scaleX(0.995)">Text #vg2ie_1</div>
<svg class="a" style="left:0;top:0;overflow:visible" width="324" height="176"><path d="M27.2 133.0 H40 M33.6 133.0 V148.4 M39.4 136.9 V148.4 M36.8 141.0 H43.8" stroke="#e8e8e8" stroke-width="1.1" fill="none"/><path d="M256.5 141.1 Q267.7 125.6 279 141.1 Q267.7 156.6 256.5 141.1Z" fill="none" stroke="#6a6a6a" stroke-width="1.2"/><circle cx="267.7" cy="141.1" r="3.4" fill="none" stroke="#6a6a6a" stroke-width="1.2"/><circle cx="267.7" cy="141.1" r="1" fill="#6a6a6a"/><rect x="286.2" y="140.0" width="12.2" height="8.6" fill="none" stroke="#6a6a6a" stroke-width="1.2"/><path d="M288.4 140.0 V136.4 A3.2 3.2 0 0 1 294.6 135.0" fill="none" stroke="#6a6a6a" stroke-width="1.2"/><rect x="291.6" y="143.0" width="1.4" height="2.6" fill="#6a6a6a"/></svg>
<div class="a" style="left:0;top:157.0px;width:324px;height:32.6px;background:#1f1f1f;border-top:1px dotted #303030"></div>
<div class="t" id="r4" style="left:54.4px;top:165.8px;font-size:15.2px;color:#8c8c8c;transform:scaleX(0.994)">Shape #5ByNp_1</div>
<svg class="a" style="left:0;top:0;overflow:visible" width="324" height="176"><path fill="#6c6c6c" d="M28.5 165.0h2.6v2.4h-2.6z M40 165.0h2.6v2.4h-2.6z M29.5 167.4h12v2.4h-12z M26.8 169.6h17.4v2.4h-17.4z M24.5 171.8h22v6h-22z"/><path fill="#1f1f1f" d="M30 172.2h3v2.6h-3z M38 172.2h3v2.6h-3z"/><path d="M256.5 173.7 Q267.7 158.2 279 173.7 Q267.7 189.2 256.5 173.7Z" fill="none" stroke="#3d3d3d" stroke-width="1.2"/><circle cx="267.7" cy="173.7" r="3.4" fill="none" stroke="#3d3d3d" stroke-width="1.2"/><circle cx="267.7" cy="173.7" r="1" fill="#3d3d3d"/><rect x="286.2" y="172.6" width="12.2" height="8.6" fill="none" stroke="#3d3d3d" stroke-width="1.2"/><path d="M288.4 172.6 V169.0 A3.2 3.2 0 0 1 294.6 167.6" fill="none" stroke="#3d3d3d" stroke-width="1.2"/><rect x="291.6" y="175.6" width="1.4" height="2.6" fill="#3d3d3d"/></svg>
<div class="a" style="left:323px;top:0;width:1px;height:176px;background:#3a3a3a"></div>
<div class="a" id="rul" style="left:324px;top:0;width:956px;height:26.4px;background:#232323;overflow:hidden">
<div class="a" style="left:4.75px;top:0.3px;width:960px;height:1.2px;background:repeating-linear-gradient(90deg,#4a4a4a 0,#4a4a4a 1px,transparent 1px,transparent 10px)"></div>
<div class="a" style="left:4.75px;top:24.6px;width:960px;height:1.2px;background:repeating-linear-gradient(90deg,#4a4a4a 0,#4a4a4a 1px,transparent 1px,transparent 10px)"></div>
<div class="a" style="left:4.75px;top:0.5px;width:1px;height:3.5px;background:#777"></div>
<div class="a" style="left:4.75px;top:22px;width:1px;height:4px;background:#777"></div>
<div class="t" style="left:-8.75px;width:30px;text-align:center;top:7.5px;font-size:11.4px;color:#c8c8c8">0.0s</div>
<div class="t" style="left:41.25px;width:30px;text-align:center;top:9.5px;font-size:9px;color:#575757">0.5s</div>
<div class="a" style="left:104.75px;top:0.5px;width:1px;height:3.5px;background:#777"></div>
<div class="a" style="left:104.75px;top:22px;width:1px;height:4px;background:#777"></div>
<div class="t" style="left:91.25px;width:30px;text-align:center;top:7.5px;font-size:11.4px;color:#c8c8c8">1.0s</div>
<div class="t" style="left:141.25px;width:30px;text-align:center;top:9.5px;font-size:9px;color:#575757">1.5s</div>
<div class="a" style="left:204.75px;top:0.5px;width:1px;height:3.5px;background:#777"></div>
<div class="a" style="left:204.75px;top:22px;width:1px;height:4px;background:#777"></div>
<div class="t" style="left:191.25px;width:30px;text-align:center;top:7.5px;font-size:11.4px;color:#c8c8c8">2.0s</div>
<div class="t" style="left:241.25px;width:30px;text-align:center;top:9.5px;font-size:9px;color:#575757">2.5s</div>
<div class="a" style="left:304.75px;top:0.5px;width:1px;height:3.5px;background:#777"></div>
<div class="a" style="left:304.75px;top:22px;width:1px;height:4px;background:#777"></div>
<div class="t" style="left:291.25px;width:30px;text-align:center;top:7.5px;font-size:11.4px;color:#c8c8c8">3.0s</div>
<div class="t" style="left:341.25px;width:30px;text-align:center;top:9.5px;font-size:9px;color:#575757">3.5s</div>
<div class="a" style="left:404.75px;top:0.5px;width:1px;height:3.5px;background:#777"></div>
<div class="a" style="left:404.75px;top:22px;width:1px;height:4px;background:#777"></div>
<div class="t" style="left:391.25px;width:30px;text-align:center;top:7.5px;font-size:11.4px;color:#c8c8c8">4.0s</div>
<div class="t" style="left:441.25px;width:30px;text-align:center;top:9.5px;font-size:9px;color:#575757">4.5s</div>
<div class="a" style="left:504.75px;top:0.5px;width:1px;height:3.5px;background:#777"></div>
<div class="a" style="left:504.75px;top:22px;width:1px;height:4px;background:#777"></div>
<div class="t" style="left:491.25px;width:30px;text-align:center;top:7.5px;font-size:11.4px;color:#c8c8c8">5.0s</div>
<div class="t" style="left:541.25px;width:30px;text-align:center;top:9.5px;font-size:9px;color:#575757">5.5s</div>
<div class="a" style="left:604.75px;top:0.5px;width:1px;height:3.5px;background:#777"></div>
<div class="a" style="left:604.75px;top:22px;width:1px;height:4px;background:#777"></div>
<div class="t" style="left:591.25px;width:30px;text-align:center;top:7.5px;font-size:11.4px;color:#c8c8c8">6.0s</div>
<div class="t" style="left:641.25px;width:30px;text-align:center;top:9.5px;font-size:9px;color:#575757">6.5s</div>
<div class="a" style="left:704.75px;top:0.5px;width:1px;height:3.5px;background:#777"></div>
<div class="a" style="left:704.75px;top:22px;width:1px;height:4px;background:#777"></div>
<div class="t" style="left:691.25px;width:30px;text-align:center;top:7.5px;font-size:11.4px;color:#c8c8c8">7.0s</div>
<div class="t" style="left:741.25px;width:30px;text-align:center;top:9.5px;font-size:9px;color:#575757">7.5s</div>
<div class="a" style="left:804.75px;top:0.5px;width:1px;height:3.5px;background:#777"></div>
<div class="a" style="left:804.75px;top:22px;width:1px;height:4px;background:#777"></div>
<div class="t" style="left:791.25px;width:30px;text-align:center;top:7.5px;font-size:11.4px;color:#c8c8c8">8.0s</div>
<div class="t" style="left:841.25px;width:30px;text-align:center;top:9.5px;font-size:9px;color:#575757">8.5s</div>
<div class="a" style="left:904.75px;top:0.5px;width:1px;height:3.5px;background:#777"></div>
<div class="a" style="left:904.75px;top:22px;width:1px;height:4px;background:#777"></div>
<div class="t" style="left:891.25px;width:30px;text-align:center;top:7.5px;font-size:11.4px;color:#c8c8c8">9.0s</div>
<div class="t" style="left:941.25px;width:30px;text-align:center;top:9.5px;font-size:9px;color:#575757">9.5s</div>
<div class="a" style="left:1004.75px;top:0.5px;width:1px;height:3.5px;background:#777"></div>
<div class="a" style="left:1004.75px;top:22px;width:1px;height:4px;background:#777"></div>
<div class="t" style="left:991.25px;width:30px;text-align:center;top:7.5px;font-size:11.4px;color:#c8c8c8">10.0s</div>
<div class="t" style="left:1041.25px;width:30px;text-align:center;top:9.5px;font-size:9px;color:#575757">10.5s</div>
</div>
<div class="a" id="trk" style="left:324px;top:26.4px;width:956px;height:160px;background:#202020;overflow:hidden">
<div class="a" style="left:0.5px;top:0.0px;width:29.51px;height:32.55px;background:#1f1f1f"></div>
<div class="a" style="left:30.01px;top:0.0px;width:434.68px;height:32.55px;background:#2b2b2b"></div>
<div class="a" style="left:30.01px;top:0.0px;width:434.68px;height:32.55px;background:repeating-linear-gradient(90deg,#1d1d1d 0,#1d1d1d 1.1px,transparent 1.1px,transparent 9.67px);background-position:-0.7px 0"></div>
<div class="a" style="left:30.01px;top:0.0px;width:9.1px;height:32.55px;background:#909090"></div>
<div class="a" style="left:59.02px;top:0.0px;width:9.1px;height:32.55px;background:#909090"></div>
<div class="a" style="left:155.72px;top:0.0px;width:9.1px;height:32.55px;background:#909090"></div>
<div class="a" style="left:175.06px;top:0.0px;width:9.1px;height:32.55px;background:#909090"></div>
<div class="a" style="left:310.44px;top:0.0px;width:9.1px;height:32.55px;background:#909090"></div>
<div class="a" style="left:329.78px;top:0.0px;width:9.1px;height:32.55px;background:#909090"></div>
<div class="a" style="left:426.48px;top:0.0px;width:9.1px;height:32.55px;background:#909090"></div>
<div class="a" style="left:455.49px;top:0.0px;width:9.1px;height:32.55px;background:#909090"></div>
<div class="a" style="left:0;top:0.0px;width:956px;height:1px;background:#ffffff0e"></div>
<div class="a" style="left:0.5px;top:32.5px;width:39.18px;height:32.55px;background:#1f1f1f"></div>
<div class="a" style="left:39.68px;top:32.5px;width:415.34px;height:32.55px;background:#2b2b2b"></div>
<div class="a" style="left:39.68px;top:32.5px;width:415.34px;height:32.55px;background:repeating-linear-gradient(90deg,#1d1d1d 0,#1d1d1d 1.1px,transparent 1.1px,transparent 9.67px);background-position:-0.7px 0"></div>
<div class="a" style="left:39.68px;top:32.5px;width:9.1px;height:32.55px;background:#909090"></div>
<div class="a" style="left:68.69px;top:32.5px;width:9.1px;height:32.55px;background:#909090"></div>
<div class="a" style="left:155.72px;top:32.5px;width:9.1px;height:32.55px;background:#909090"></div>
<div class="a" style="left:175.06px;top:32.5px;width:9.1px;height:32.55px;background:#909090"></div>
<div class="a" style="left:310.44px;top:32.5px;width:9.1px;height:32.55px;background:#909090"></div>
<div class="a" style="left:329.78px;top:32.5px;width:9.1px;height:32.55px;background:#909090"></div>
<div class="a" style="left:416.81px;top:32.5px;width:9.1px;height:32.55px;background:#909090"></div>
<div class="a" style="left:445.82px;top:32.5px;width:9.1px;height:32.55px;background:#909090"></div>
<div class="a" style="left:0;top:32.5px;width:956px;height:1px;background:#ffffff0e"></div>
<div class="a" style="left:0.5px;top:65.1px;width:29.51px;height:32.55px;background:#1f1f1f"></div>
<div class="a" style="left:30.01px;top:65.1px;width:434.68px;height:32.55px;background:#2b2b2b"></div>
<div class="a" style="left:30.01px;top:65.1px;width:434.68px;height:32.55px;background:repeating-linear-gradient(90deg,#1d1d1d 0,#1d1d1d 1.1px,transparent 1.1px,transparent 9.67px);background-position:-0.7px 0"></div>
<div class="a" style="left:30.01px;top:65.1px;width:9.1px;height:32.55px;background:#909090"></div>
<div class="a" style="left:59.02px;top:65.1px;width:9.1px;height:32.55px;background:#909090"></div>
<div class="a" style="left:426.48px;top:65.1px;width:9.1px;height:32.55px;background:#909090"></div>
<div class="a" style="left:455.49px;top:65.1px;width:9.1px;height:32.55px;background:#909090"></div>
<div class="a" style="left:0;top:65.1px;width:956px;height:1px;background:#ffffff0e"></div>
<div class="a" style="left:1.00px;top:97.6px;width:492.70px;height:32.55px;background:#2b2b2b"></div>
<div class="a" style="left:1.00px;top:97.6px;width:492.70px;height:32.55px;background:repeating-linear-gradient(90deg,#1d1d1d 0,#1d1d1d 1.1px,transparent 1.1px,transparent 9.67px);background-position:-0.7px 0"></div>
<div class="a" style="left:1.00px;top:97.6px;width:9.1px;height:32.55px;background:#909090"></div>
<div class="a" style="left:30.01px;top:97.6px;width:9.1px;height:32.55px;background:#909090"></div>
<div class="a" style="left:155.72px;top:97.6px;width:9.1px;height:32.55px;background:#ffc107"></div>
<div class="a" style="left:175.06px;top:97.6px;width:9.1px;height:32.55px;background:#909090"></div>
<div class="a" style="left:310.44px;top:97.6px;width:9.1px;height:32.55px;background:#909090"></div>
<div class="a" style="left:329.78px;top:97.6px;width:9.1px;height:32.55px;background:#909090"></div>
<div class="a" style="left:455.49px;top:97.6px;width:9.1px;height:32.55px;background:#909090"></div>
<div class="a" style="left:484.50px;top:97.6px;width:9.1px;height:32.55px;background:#909090"></div>
<div class="a" style="left:0;top:97.6px;width:956px;height:1px;background:#ffffff0e"></div>
<div class="a" style="left:1.00px;top:130.2px;width:492.70px;height:32.55px;background:#2b2b2b"></div>
<div class="a" style="left:1.00px;top:130.2px;width:492.70px;height:32.55px;background:repeating-linear-gradient(90deg,#1d1d1d 0,#1d1d1d 1.1px,transparent 1.1px,transparent 9.67px);background-position:-0.7px 0"></div>
<div class="a" style="left:1.00px;top:130.2px;width:9.1px;height:32.55px;background:#909090"></div>
<div class="a" style="left:30.01px;top:130.2px;width:9.1px;height:32.55px;background:#909090"></div>
<div class="a" style="left:455.49px;top:130.2px;width:9.1px;height:32.55px;background:#909090"></div>
<div class="a" style="left:484.50px;top:130.2px;width:9.1px;height:32.55px;background:#909090"></div>
<div class="a" style="left:0;top:130.2px;width:956px;height:1px;background:#ffffff0e"></div>
</div>
<div class="a" style="left:483.8px;top:0;width:1.2px;height:176px;background:#cfcfcf"></div>
<div class="a" style="left:483.3px;top:0;width:2.2px;height:3px;background:#fff"></div>
<div class="a" style="left:483.3px;top:23px;width:2.2px;height:3.5px;background:#fff"></div>
</div>
</body>
</html>
